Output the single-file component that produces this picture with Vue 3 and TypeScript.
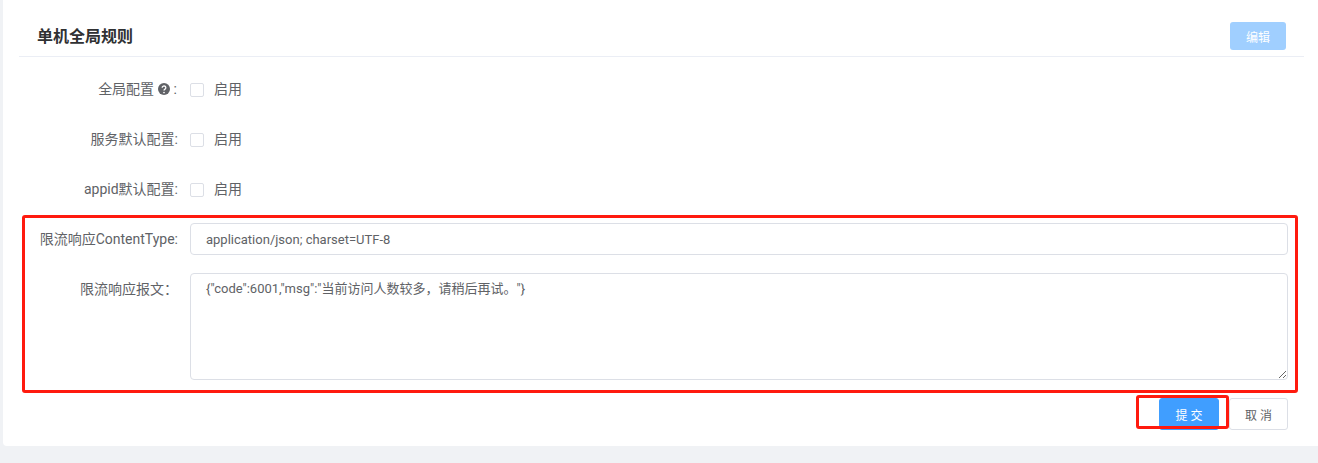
<script setup lang="ts">
import { ref } from 'vue'

const rows = ref([
  { label: '服务默认配置:' },
  { label: 'appid默认配置:' },
])
const contentType = ref('application/json; charset=UTF-8')
const body = ref('{"code":6001,"msg":"当前访问人数较多，请稍后再试。"}')
</script>

<template>
  <div class="page">
    <div class="card">
      <div class="header">
        <h2 class="title">单机全局规则</h2>
        <button class="btn-edit" type="button" disabled>编辑</button>
      </div>
      <form class="form" @submit.prevent>
        <div class="row">
          <label class="label">全局配置
            <svg class="help" viewBox="0 0 12 12" width="12" height="12">
              <circle cx="6" cy="6" r="6" fill="#606266" />
              <path d="M4.2 4.7a1.8 1.7 0 1 1 2.8 1.4c-.7.5-1 .7-1 1.5" fill="none" stroke="#fff" stroke-width="1.3" />
              <circle cx="6" cy="9.5" r=".85" fill="#fff" />
            </svg>
            <span class="colon">:</span>
          </label>
          <div class="control check-line"><span class="box"></span><span class="check-text">启用</span></div>
        </div>
        <div v-for="r in rows" :key="r.label" class="row">
          <label class="label">{{ r.label }}</label>
          <div class="control check-line"><span class="box"></span><span class="check-text">启用</span></div>
        </div>
        <div class="row">
          <label class="label">限流响应ContentType:</label>
          <div class="control"><input v-model="contentType" class="input" /></div>
        </div>
        <div class="row row-area">
          <label class="label">限流响应报文：</label>
          <div class="control"><textarea v-model="body" class="textarea"></textarea></div>
        </div>
      </form>
      <div class="footer">
        <button class="btn btn-primary" type="button">提 交</button>
        <button class="btn btn-default" type="button">取 消</button>
      </div>
      <div class="mark mark-form"></div>
      <div class="mark mark-submit"></div>
    </div>
  </div>
</template>

<style>
html, body { margin: 0; background: #f0f2f5; }
</style>

<style scoped>
.page {
  width: 1318px;
  height: 463px;
  background: #f0f2f5;
  padding-left: 3px;
  box-sizing: border-box;
  overflow: hidden;
  font-family: Roboto, "Noto Sans CJK SC", sans-serif;
  font-size: 14px;
  color: #606266;
}
.card {
  position: relative;
  height: 446px;
  background: #fff;
  border-radius: 0 0 0 4px;
  padding: 0 14px 0 16px;
  box-sizing: border-box;
}
.header {
  height: 57px;
  box-sizing: border-box;
  border-bottom: 1px solid #ebeef5;
  display: flex;
  align-items: flex-start;
  justify-content: space-between;
  padding: 22px 18px 0 18px;
}
.title {
  margin: 4px 0 0;
  font-size: 16px;
  line-height: 22px;
  font-weight: 700;
  color: #303133;
}
.btn-edit {
  width: 56px;
  height: 28px;
  border: 0;
  border-radius: 3px;
  background: #a0cfff;
  color: #fff;
  font: inherit;
  font-size: 12px;
  padding: 0;
}
.form {
  padding-top: 16px;
}
.row {
  display: flex;
  margin-bottom: 18px;
  min-height: 32px;
}
.row-area { margin-bottom: 0; }
.label {
  width: 159px;
  height: 32px;
  flex: none;
  text-align: right;
  padding-top: 1px;
  box-sizing: border-box;
  line-height: 31px;
  white-space: nowrap;
  color: #606266;
}
.help {
  vertical-align: -1px;
  margin: 0;
}
.colon { margin-left: 4px; margin-right: 1px; }
.control {
  margin-left: 12px;
  width: 1098px;
}
.check-line {
  display: flex;
  align-items: center;
  height: 32px;
}
.box {
  width: 14px;
  height: 14px;
  margin-top: 1px;
  border: 1px solid #dcdfe6;
  border-radius: 2px;
  box-sizing: border-box;
  background: #fff;
}
.check-text {
  margin-left: 10px;
  line-height: 32px;
  align-self: flex-start;
  color: #606266;
}
.input, .textarea {
  display: block;
  width: 100%;
  box-sizing: border-box;
  border: 1px solid #dcdfe6;
  border-radius: 4px;
  background: #fff;
  color: #606266;
  font: inherit;
  font-size: 13px;
  padding: 0 15px;
  outline: none;
}
.input { height: 32px; }
.textarea {
  height: 107px;
  padding: 5px 15px;
  line-height: 20px;
  resize: vertical;
}
.footer {
  display: flex;
  justify-content: flex-end;
  gap: 10px;
  margin-top: 18px;
  padding-right: 16px;
}
.btn {
  height: 32px;
  box-sizing: border-box;
  border-radius: 3px;
  font: inherit;
  font-size: 12px;
  padding: 0;
}
.btn-primary {
  width: 60px;
  border: 1px solid #409eff;
  background: #409eff;
  color: #fff;
}
.btn-default {
  width: 59px;
  border: 1px solid #dcdfe6;
  background: #fff;
  color: #606266;
}
.mark {
  position: absolute;
  box-sizing: border-box;
  border: 3px solid #ff1a0e;
  border-radius: 3px;
  pointer-events: none;
}
.mark-form {
  left: 19px;
  top: 215px;
  width: 1276px;
  height: 178px;
}
.mark-submit {
  left: 1133px;
  top: 395px;
  width: 93px;
  height: 34px;
}
</style>
